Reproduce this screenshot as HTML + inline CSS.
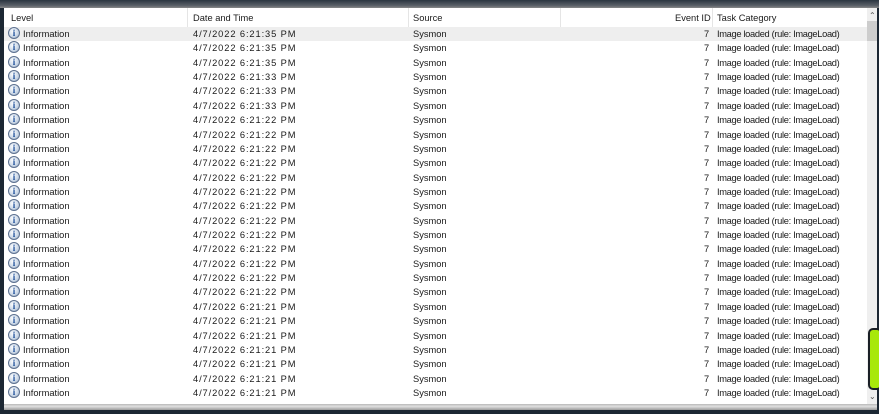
<!DOCTYPE html>
<html><head><style>
body{margin:0;width:879px;height:414px;background:#1c2733;position:relative;overflow:hidden;font-family:"Liberation Sans",sans-serif;font-size:9.3px;color:#1a1a1a}
#top{position:absolute;left:0;top:0;width:879px;height:8px;background:linear-gradient(#2a3540,#5a6068 70%,#888)}
#panel{position:absolute;left:4px;top:8px;width:873px;height:396px;background:#fff}
#hdr{position:absolute;left:0;top:0;width:863px;height:19px;background:#fff}
.h{position:absolute;top:5px}
.sep{position:absolute;top:0;width:1px;height:19px;background:#e5e5e5}
.row{position:absolute;left:0;width:863px;height:14.36px}
.row span{position:absolute;top:2px;white-space:nowrap}
.d{letter-spacing:0.9px}
.c{letter-spacing:-0.33px}
.ic{position:absolute;left:4px;top:0px;width:12px;height:12px;border-radius:50%;border:1px solid #5d7190;background:radial-gradient(circle at 40% 35%,#fff,#c9d6e6 60%,#8aa0bc);box-sizing:border-box;font:bold 9px "Liberation Serif",serif;color:#1d4f9a;text-align:center;line-height:10px}
#sb{position:absolute;left:863px;top:0;width:10px;height:396px;background:#efefef}
#thumb{position:absolute;left:863px;top:13px;width:10px;height:20px;background:#cdcdcd}
#bot{position:absolute;left:4px;top:404px;width:873px;height:6px;background:linear-gradient(#b8b8b8,#e0e0e0 40%,#9a9a9a)}
#green{position:absolute;left:868px;top:328px;width:14px;height:62px;background:#a8e80a;border:2px solid #1a1f26;border-radius:5px;box-sizing:border-box}
</style></head><body>
<div id="top"></div>
<div id="panel">
<div id="hdr">
<span class="h" style="left:7px">Level</span>
<div class="sep" style="left:183px"></div>
<span class="h" style="left:189px">Date and Time</span>
<div class="sep" style="left:404px"></div>
<span class="h" style="left:409px">Source</span>
<div class="sep" style="left:556px"></div>
<span class="h" style="left:671px">Event ID</span>
<div class="sep" style="left:708px"></div>
<span class="h" style="left:713px">Task Category</span>
</div>
<div id="rows"></div>
<div id="sb"></div><div id="thumb"></div>
<span style="position:absolute;left:865px;top:3px;font-size:8px;color:#555">&#8963;</span>
<span style="position:absolute;left:865px;top:384px;font-size:8px;color:#555">&#8964;</span>
</div>
<div id="bot"></div>
<div id="green"></div>
<script>
var t=["35","35","35","33","33","33","22","22","22","22","22","22","22","22","22","22","22","22","22","21","21","21","21","21","21","21"];
var h="";
for(var i=0;i<26;i++){var y=19+i*14.36;
h+='<div class="row" style="top:'+y+'px;'+(i==0?'background:#eeeeee;':'')+'"><div class="ic">i</div><span style="left:19px">Information</span><span class="d" style="left:189px">4/7/2022 6:21:'+t[i]+' PM</span><span style="left:409px">Sysmon</span><span style="left:700px">7</span><span class="c" style="left:713px">Image loaded (rule: ImageLoad)</span></div>';}
document.getElementById("rows").innerHTML=h;
</script>
</body></html>
